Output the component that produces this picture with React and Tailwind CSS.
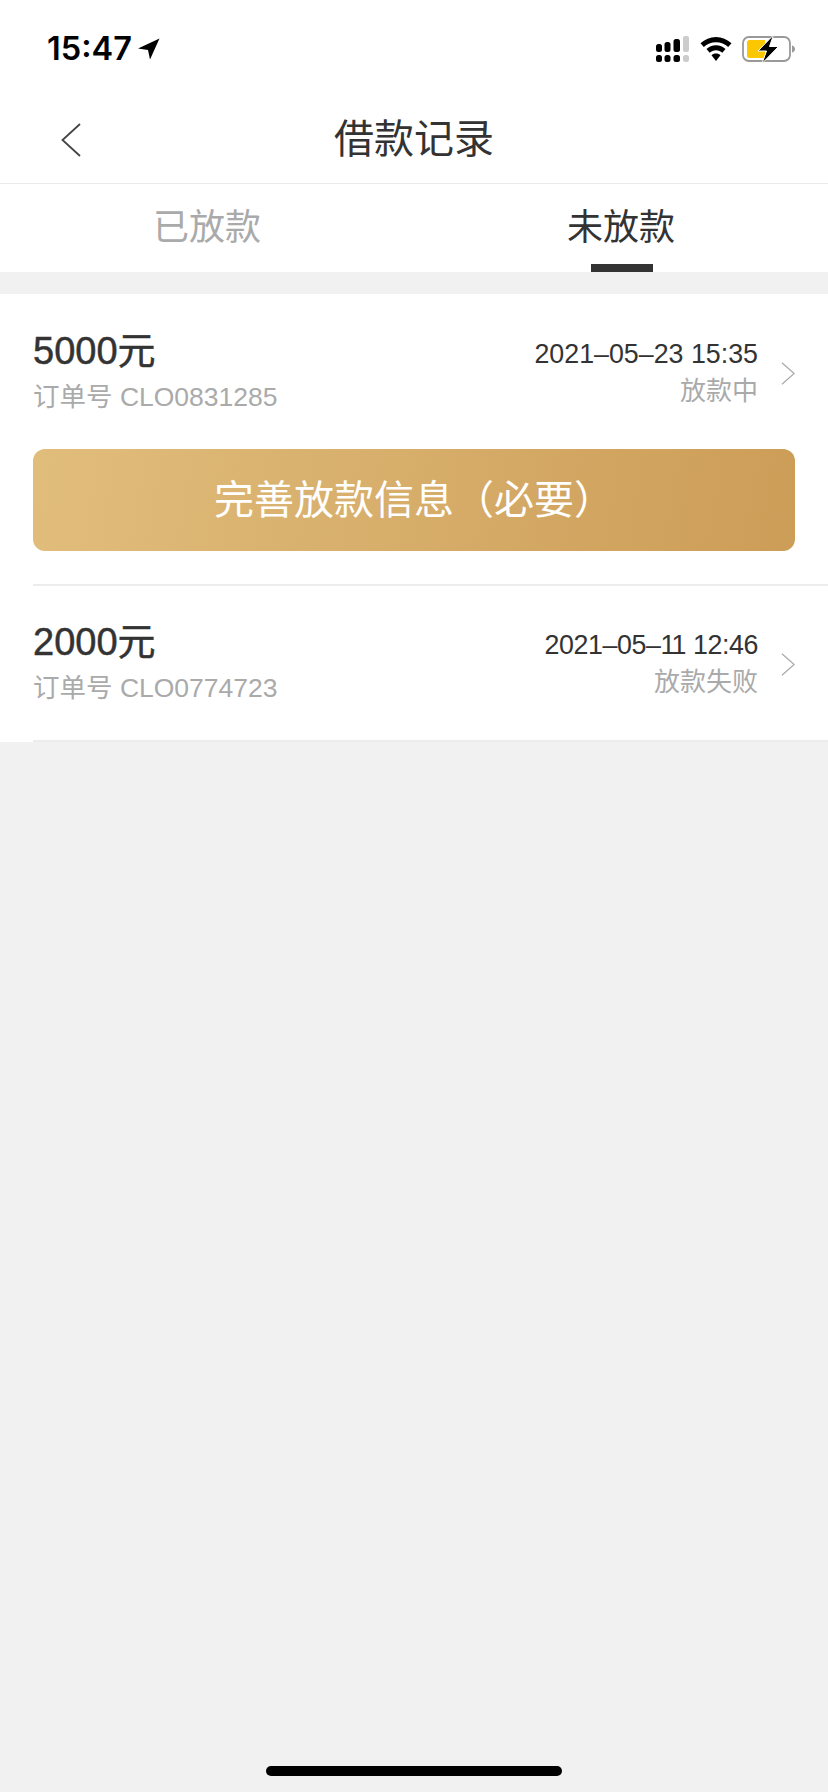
const sans = 'font-["Liberation_Sans","Noto_Sans_CJK_SC",sans-serif]';

function SignalIcon() {
  return (
    <svg width="34" height="26" viewBox="0 0 34 26" fill="#000">
      <rect x="0" y="8" width="6" height="8" rx="2.500" />
      <rect x="8.500" y="6" width="6" height="10" rx="2.500" />
      <rect x="17.500" y="3" width="6.500" height="13" rx="2.500" />
      <rect x="27" y="0" width="6" height="16" rx="2" fill="#ccc" />
      <rect x="0" y="19" width="6" height="7" rx="2.500" />
      <rect x="8.500" y="19" width="6" height="7" rx="2.500" />
      <rect x="17.500" y="19" width="6.500" height="7" rx="2.500" />
      <rect x="27" y="19" width="6" height="7" rx="2.500" fill="#ccc" />
    </svg>
  );
}

function WifiIcon() {
  return (
    <svg width="32" height="24" viewBox="0 0 32 24" fill="#000">
      <path d="M16 0C10 0 4.800 2.300.5 6.300l3.300 3.800C7 7 11.300 5.200 16 5.200s9 1.800 12.200 4.900l3.300-3.800C27.200 2.300 22 0 16 0z" />
      <path d="M16 8.200c-3.800 0-7 1.400-9.500 3.800l3.200 3.700c1.700-1.500 3.800-2.400 6.300-2.400s4.600.9 6.300 2.400l3.200-3.700C23 9.600 19.800 8.200 16 8.200z" />
      <path d="M16 16.500c-1.900 0-3.400.6-4.500 1.700L16 24l4.500-5.800c-1.100-1.100-2.600-1.700-4.500-1.700z" />
    </svg>
  );
}

function BatteryIcon() {
  return (
    <svg width="54" height="28" viewBox="0 0 54 28">
      <rect x="1" y="2" width="47" height="24" rx="6" fill="none" stroke="#999" strokeWidth="1.800" />
      <path d="M50 10.500c2 .5 3 2 3 3.500s-1 3-3 3.500z" fill="#999" />
      <path d="M5 7.500a2.500 2.500 0 0 1 2.500-2.500H23v18H7.500A2.500 2.500 0 0 1 5 20.500z" fill="#fbc700" />
      <path d="M31.500 0L16 16h8.500L20 28.500 36.500 11.500H27.500z" fill="#000" stroke="#fff" strokeWidth="1" />
    </svg>
  );
}

function Chevron({ dir = 'right', className, color }) {
  const d = dir === 'right' ? 'M1 1l13 11.500L1 24' : 'M19 1L1.500 17 19 33';
  return (
    <svg className={className} viewBox={dir === 'right' ? '0 0 16 25' : '0 0 21 34'} fill="none" stroke={color} strokeWidth={dir === 'right' ? 1.3 : 1.8}>
      <path d={d} />
    </svg>
  );
}

function LoanRow({ amount, order, date, status }) {
  return (
    <div className="flex items-center">
      <div className="flex-1 pt-[3px] pb-[1px]">
        <p className="text-[38px] leading-[44px] text-[#333] [-webkit-text-stroke:0.5px_#333]">{amount}</p>
        <p className="mt-[2px] text-[26.500px] leading-[44px] text-[#aaa]">订单号 {order}</p>
      </div>
      <div className="text-right">
        <p className="text-[26.800px] leading-[37px] text-[#333]">{date}</p>
        <p className="text-[26px] leading-[37px] text-[#aaa]">{status}</p>
      </div>
      <Chevron className="ml-[22px] h-[25px] w-[15px] translate-x-[1px]" color="#aaa" />
    </div>
  );
}

export default function App() {
  return (
    <div className={`${sans} flex h-[1792px] flex-col bg-[#f1f1f1]`}>
      <div className="flex h-[98px] items-center justify-between bg-white pl-[47px] pr-[32px]">
        <div className="flex items-center gap-[6px]">
          <span className="font-['Inter',sans-serif] text-[32.500px] font-semibold leading-none text-black">15:47</span>
          <svg width="22" height="22" viewBox="0 0 22 22" fill="#000">
            <path d="M21.500.500L0 10.500l10 1.500 2 9.500z" />
          </svg>
        </div>
        <div className="flex items-center gap-[10px]">
          <SignalIcon />
          <WifiIcon />
          <BatteryIcon />
        </div>
      </div>

      <div className="relative flex h-[86px] items-center justify-center border-b border-[#eaeaea] bg-white pb-[4px]">
        <Chevron dir="left" className="absolute left-[61px] top-[25px] h-[34px] w-[21px]" color="#444" />
        <h1 className="text-[40px] font-normal text-[#333]">借款记录</h1>
      </div>

      <div className="flex h-[88px] bg-white">
        <div className="flex w-[414px] justify-center pt-[21px]">
          <span className="text-[36px] leading-[46px] text-[#aaa]">已放款</span>
        </div>
        <div className="relative flex w-[414px] justify-center pt-[21px]">
          <span className="text-[36px] leading-[46px] text-[#333]">未放款</span>
          <div className="absolute bottom-0 left-[177px] h-[8px] w-[62px] bg-[#333]" />
        </div>
      </div>

      <div className="mt-[22px] bg-white">
        <div className="pl-[33px]">
          <div className="pt-[32px] pr-[33px]">
            <LoanRow amount="5000元" order="CLO0831285" date="2021–05–23 15:35" status="放款中" />
            <button className="mt-[29px] flex h-[102px] w-full items-center justify-center rounded-[12px] bg-[linear-gradient(100deg,#e1bd7c,#cc9d57)] text-[40px] text-white">
              完善放款信息（必要）
            </button>
          </div>
          <div className="mt-[33px] h-[2px] bg-[#ececec]" />
          <div className="pt-[31px] pr-[33px] pb-[29px]">
            <LoanRow
              amount="2000元"
              order="CLO0774723"
              date={<span className="tracking-[-0.4px]">2021–05–<span className="tracking-[-4px]">1</span>1 12:46</span>}
              status="放款失败"
            />
          </div>
          <div className="h-[2px] bg-[#ececec]" />
        </div>
      </div>

      <div className="mt-auto mb-[16px] h-[10px] w-[296px] self-center rounded-full bg-black" />
    </div>
  );
}
